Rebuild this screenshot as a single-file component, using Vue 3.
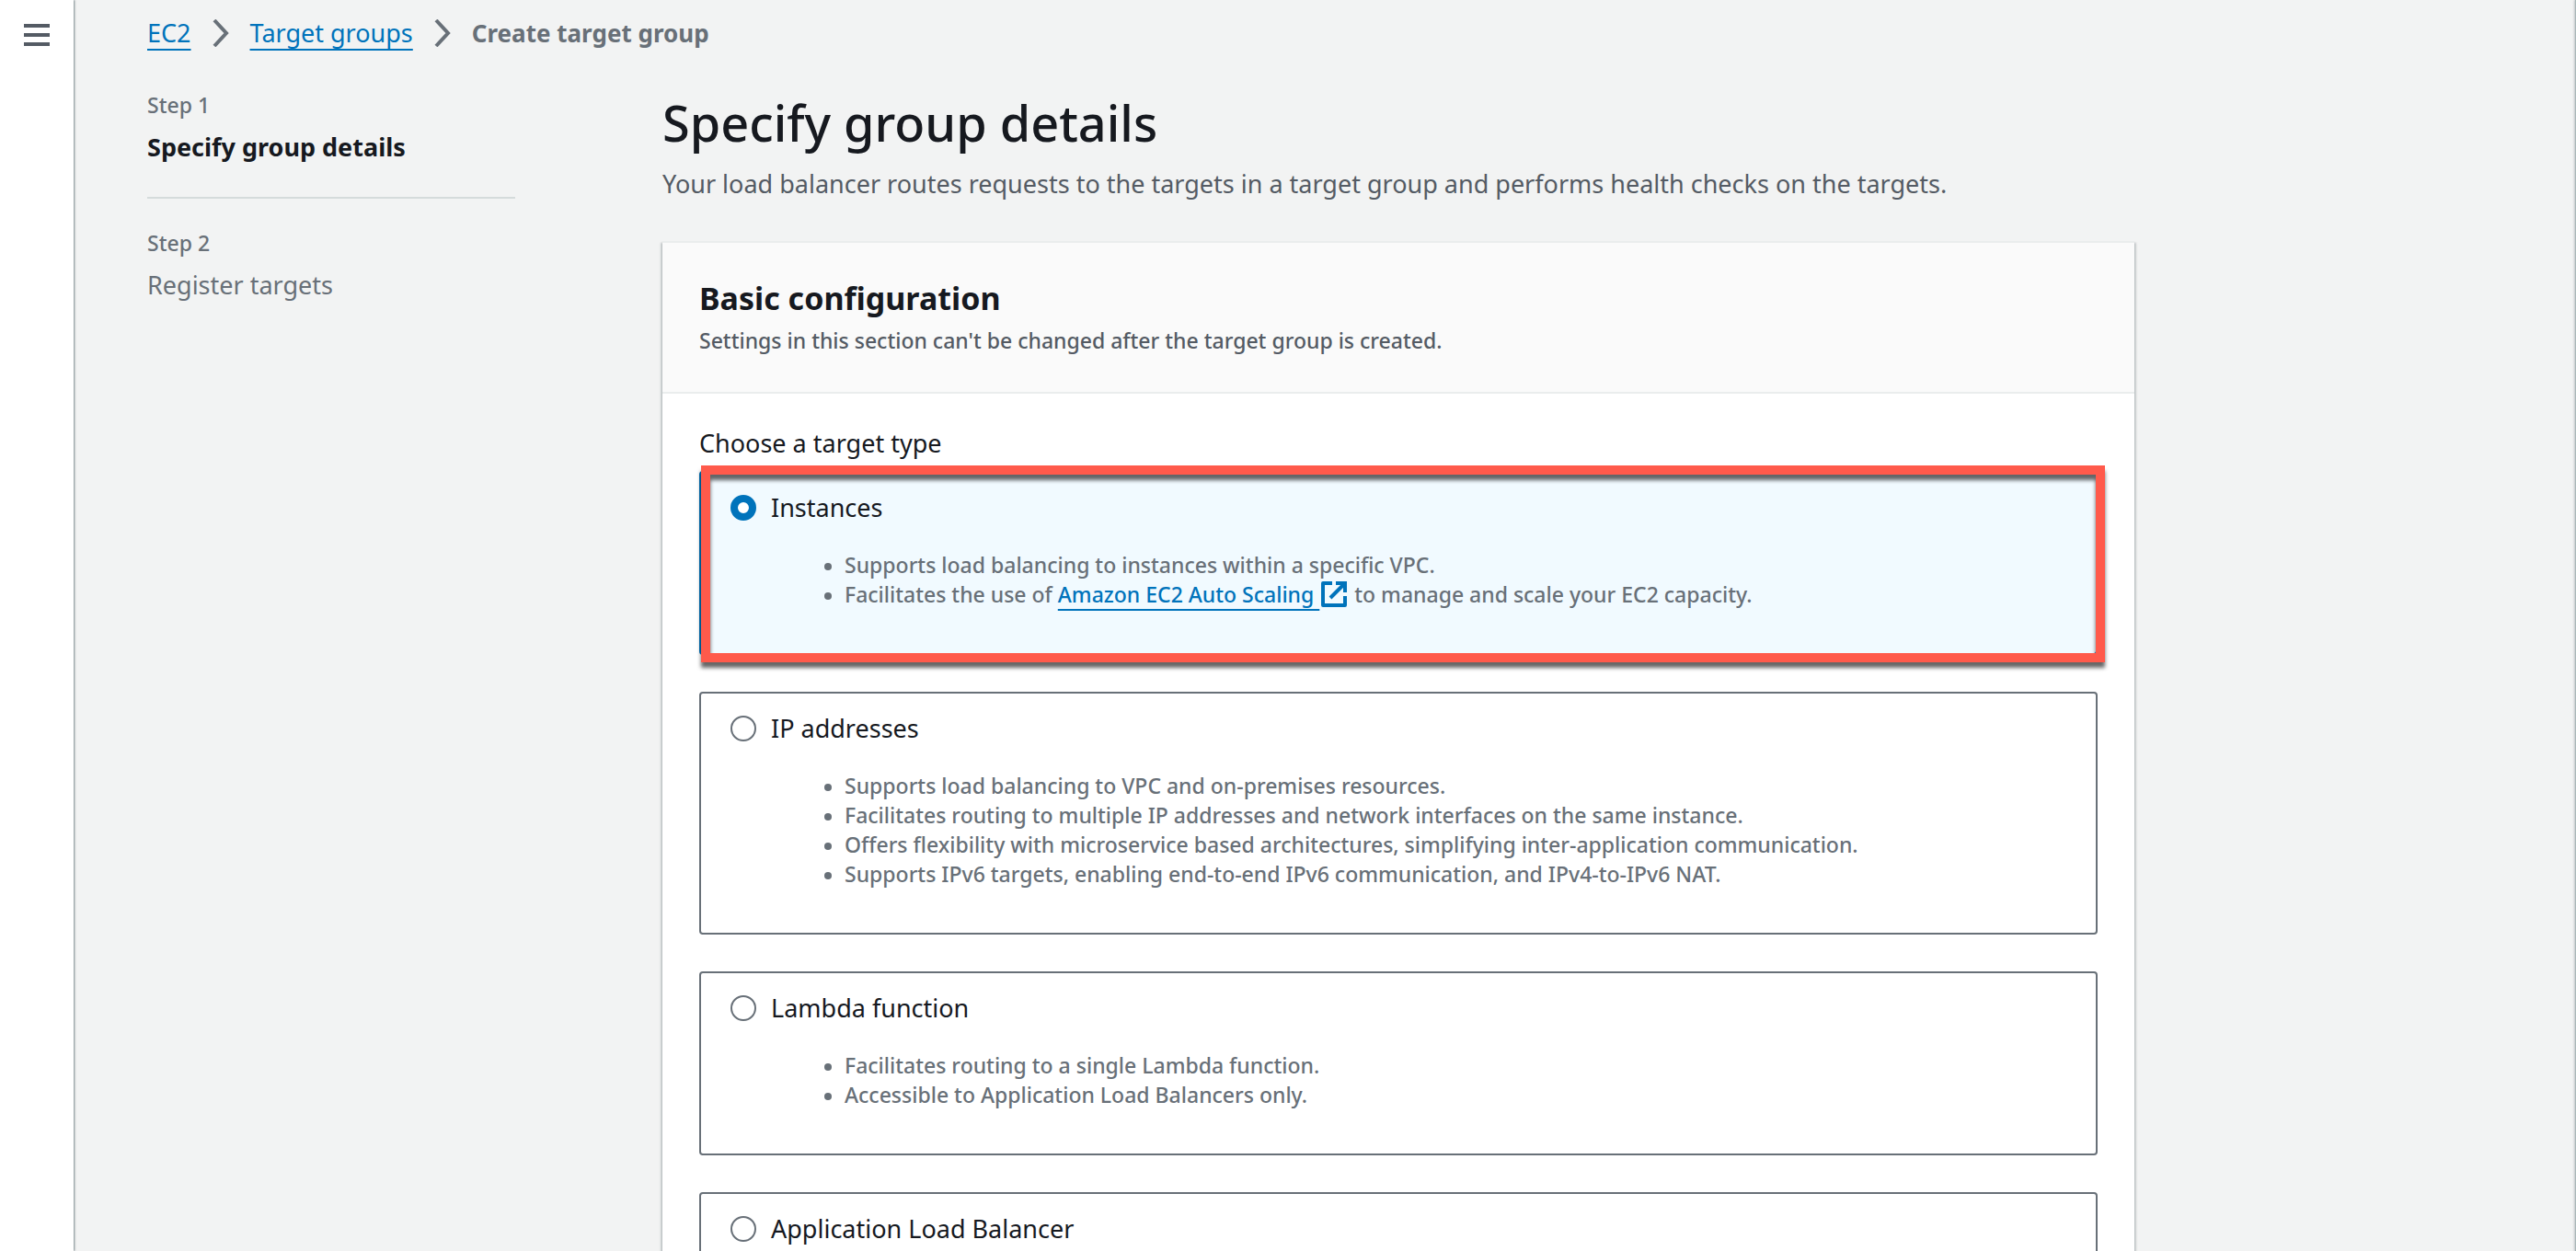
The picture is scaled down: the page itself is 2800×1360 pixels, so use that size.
<script setup>
import { ref } from 'vue'

const selected = ref('instances')

const targetTypes = [
  {
    id: 'instances',
    name: 'Instances',
    points: [
      { text: 'Supports load balancing to instances within a specific VPC.' },
      {
        text: 'Facilitates the use of ',
        link: 'Amazon EC2 Auto Scaling',
        after: ' to manage and scale your EC2 capacity.'
      }
    ]
  },
  {
    id: 'ip',
    name: 'IP addresses',
    points: [
      { text: 'Supports load balancing to VPC and on-premises resources.' },
      { text: 'Facilitates routing to multiple IP addresses and network interfaces on the same instance.' },
      { text: 'Offers flexibility with microservice based architectures, simplifying inter-application communication.' },
      { text: 'Supports IPv6 targets, enabling end-to-end IPv6 communication, and IPv4-to-IPv6 NAT.' }
    ]
  },
  {
    id: 'lambda',
    name: 'Lambda function',
    points: [
      { text: 'Facilitates routing to a single Lambda function.' },
      { text: 'Accessible to Application Load Balancers only.' }
    ]
  },
  { id: 'alb', name: 'Application Load Balancer', points: [] }
]
</script>

<template>
  <div class="app">
    <aside class="rail">
      <button class="menu" type="button" aria-label="Open navigation">
        <svg width="28" height="24" viewBox="0 0 28 24">
          <path d="M0 2h28M0 12h28M0 22h28" stroke="#545b64" stroke-width="4" />
        </svg>
      </button>
    </aside>

    <div class="content">
      <nav class="crumbs" aria-label="Breadcrumbs">
        <a href="#ec2">EC2</a>
        <svg class="chevron" width="18" height="30" viewBox="0 0 18 30">
          <path d="M2 1l13 14L2 29" fill="none" stroke="#687078" stroke-width="4" />
        </svg>
        <a href="#target-groups">Target groups</a>
        <svg class="chevron" width="18" height="30" viewBox="0 0 18 30">
          <path d="M2 1l13 14L2 29" fill="none" stroke="#687078" stroke-width="4" />
        </svg>
        <span class="current">Create target group</span>
      </nav>

      <div class="wizard">
        <ol class="steps">
          <li class="step">
            <span class="step-number">Step 1</span>
            <span class="step-name active">Specify group details</span>
          </li>
          <li class="step">
            <span class="step-number">Step 2</span>
            <span class="step-name">Register targets</span>
          </li>
        </ol>

        <main>
          <h1>Specify group details</h1>
          <p class="intro">
            Your load balancer routes requests to the targets in a target group and performs health checks on the targets.
          </p>

          <section class="card">
            <header class="card-head">
              <h2>Basic configuration</h2>
              <p>Settings in this section can't be changed after the target group is created.</p>
            </header>

            <fieldset class="card-body">
              <legend>Choose a target type</legend>
              <div
                v-for="type in targetTypes"
                :key="type.id"
                class="tile"
                :class="{ selected: selected === type.id }"
              >
                <label class="tile-label" :for="type.id">
                  <input :id="type.id" v-model="selected" type="radio" name="target-type" :value="type.id" />
                  {{ type.name }}
                </label>
                <ul>
                  <li v-for="point in type.points" :key="point.text">{{ point.text }}<template v-if="point.link"><a class="external" href="#auto-scaling">{{ point.link }}&nbsp;<svg width="28" height="28" viewBox="0 0 28 28"><path d="M12 2H2v24h24V16" fill="none" stroke="#0073bb" stroke-width="4" stroke-linejoin="round" /><path d="M10 18L25 3M16 2h10v10" fill="none" stroke="#0073bb" stroke-width="4" /></svg></a>{{ point.after }}</template></li>
                </ul>
                <div v-if="type.id === 'instances'" class="highlight"></div>
              </div>
            </fieldset>
          </section>
        </main>
      </div>
    </div>

    <aside class="tools"></aside>
  </div>
</template>

<style>
body {
  margin: 0;
  overflow: hidden;
}
</style>

<style scoped>
.app {
  display: flex;
  height: 100vh;
  overflow: hidden;
  background: #f2f3f3;
  color: #16191f;
  font-family: "Noto Sans", "Open Sans", sans-serif;
  font-size: 27px;
  font-weight: 400;
  line-height: 36px;
}

.rail {
  flex: none;
  width: 80px;
  background: #fff;
  box-shadow: 1px 0 2px rgba(0, 28, 36, 0.5);
}

.menu {
  display: block;
  margin: 26px auto 0;
  padding: 0;
  border: 0;
  background: none;
  line-height: 0;
}

.content {
  flex: 1;
  min-width: 0;
  padding: 16px 80px 0;
}

.tools {
  flex: none;
  width: 1px;
  background: #aab7b8;
  box-shadow: -1px 0 2px rgba(0, 28, 36, 0.3);
}

a {
  color: #0073bb;
  text-decoration: underline;
  text-decoration-thickness: 2px;
  text-underline-offset: 7px;
  text-decoration-skip-ink: none;
}

.crumbs {
  display: flex;
  align-items: center;
  line-height: 40px;
}

.chevron {
  margin: 0 23px;
}

.current {
  color: #687078;
  font-size: 26px;
  font-weight: 700;
}

.wizard {
  display: grid;
  grid-template-columns: 400px minmax(0, 1600px);
  column-gap: 160px;
  padding-top: 42px;
}

.steps {
  margin: 0;
  padding: 0;
  list-style: none;
  color: #687078;
}

.step + .step {
  margin-top: 36px;
  padding-top: 32px;
  border-top: 2px solid #d5dbdb;
}

.step-number {
  display: block;
  margin-bottom: 12px;
  font-size: 23px;
  font-weight: 500;
  line-height: 32px;
}

.step-name {
  display: block;
}

.active {
  color: #16191f;
  font-weight: 700;
}

h1 {
  margin: 0 0 14px;
  font-size: 54px;
  font-weight: 500;
  line-height: 70px;
}

.intro {
  margin: 0 0 44px;
  color: #545b64;
}

.card {
  border-top: 2px solid #eaeded;
  background: #fff;
  box-shadow:
    0 2px 2px rgba(0, 28, 36, 0.3),
    2px 2px 2px rgba(0, 28, 36, 0.15),
    -2px 2px 2px rgba(0, 28, 36, 0.15);
}

.card-head {
  padding: 38px 40px 40px;
  border-bottom: 2px solid #eaeded;
  background: #fafafa;
}

h2 {
  margin: 0 0 8px;
  font-size: 34px;
  font-weight: 700;
  line-height: 44px;
}

.card-head p {
  margin: 0;
  color: #545b64;
  font-size: 23px;
  font-weight: 500;
  line-height: 32px;
}

.card-body {
  display: flex;
  flex-direction: column;
  gap: 40px;
  min-width: 0;
  margin: 0;
  padding: 36px 40px 40px;
  border: 0;
}

legend {
  float: left;
  margin-bottom: -28px;
  padding: 0;
}

.tile {
  position: relative;
  padding: 20px 32px 48px;
  border: 2px solid #687078;
  border-radius: 4px;
}

.tile.selected {
  border-color: #0073bb;
  background: #f1faff;
}

.tile-label {
  display: flex;
  align-items: center;
  gap: 16px;
}

input {
  flex: none;
  appearance: none;
  width: 28px;
  height: 28px;
  margin: 0;
  border: 2px solid #687078;
  border-radius: 50%;
  background: #fff;
}

input:checked {
  border: 8px solid #0073bb;
}

ul {
  margin: 28px 0 0 44px;
  padding: 0 0 0 80px;
  list-style: none;
  color: #687078;
  font-size: 23px;
  font-weight: 500;
  line-height: 32px;
}

ul li::before {
  content: "";
  display: inline-block;
  width: 8px;
  height: 8px;
  margin: 0 14px 0 -22px;
  border-radius: 50%;
  background: currentColor;
  vertical-align: 3px;
}

.external svg {
  margin: -6px 2px;
  vertical-align: 1px;
}

.highlight {
  position: absolute;
  inset: -8px -10px -10px 0;
  border: 10px solid #ff5a4b;
  filter: drop-shadow(0 6px 2px rgba(0, 0, 0, 0.6));
  pointer-events: none;
}
</style>
